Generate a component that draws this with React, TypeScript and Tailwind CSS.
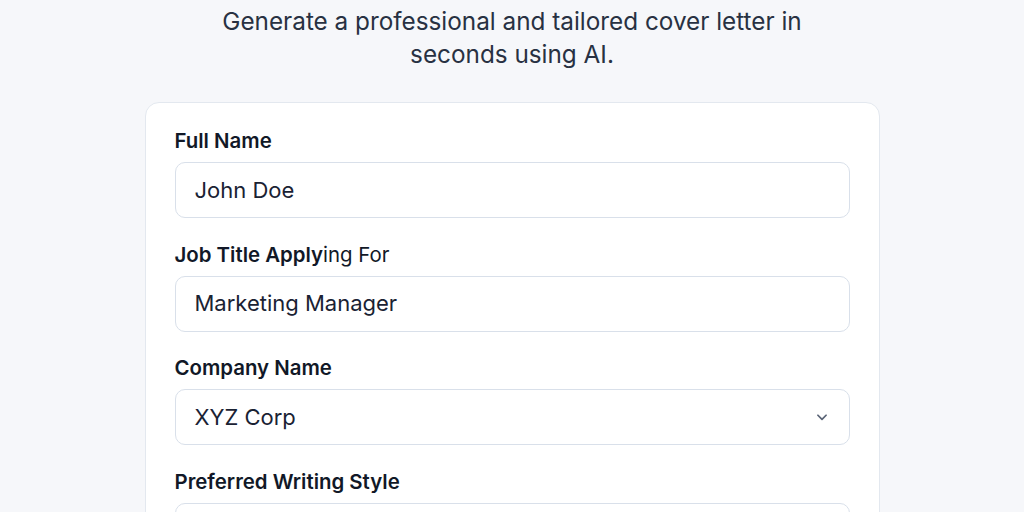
import React from "react";

function Field({ label, value, select }: { label: React.ReactNode; value: string; select?: boolean }) {
  return (
    <div className="flex flex-col">
      <div className="text-[20.4px] leading-[28px] font-semibold text-[#111827] mb-[7px]">{label}</div>
      <div className="h-[56px] rounded-[10px] border border-[#d9e0ea] bg-white flex items-center justify-between pl-[19px] pr-[20px]">
        <span className="text-[22px] text-[#1a2233]">{value}</span>
        {select && (
          <svg width="14" height="14" viewBox="0 0 24 24" fill="none" stroke="#5b6577" strokeWidth="3" strokeLinecap="round" strokeLinejoin="round">
            <path d="M5 9l7 7 7-7" />
          </svg>
        )}
      </div>
    </div>
  );
}

export default function App() {
  return (
    <div className="w-[1024px] h-[512px] overflow-hidden bg-[#f6f7fa] flex flex-col items-center pt-[5px]" style={{ fontFamily: "Inter, 'Noto Sans', sans-serif" }}>
      <p className="text-[24.3px] leading-[33px] text-[#283142] text-center w-[640px]">
        Generate a professional and tailored cover letter in seconds using AI.
      </p>
      <div className="mt-[31px] w-[735px] bg-white border border-[#e3e8ef] rounded-[14px] px-[29px] pt-[24px] flex flex-col gap-[22.5px]">
        <Field label="Full Name" value="John Doe" />
        <Field label={<>Job Title Apply<span className="font-normal">ing For</span></>} value="Marketing Manager" />
        <Field label="Company Name" value="XYZ Corp" select />
        <Field label="Preferred Writing Style" value="" />
      </div>
    </div>
  );
}
